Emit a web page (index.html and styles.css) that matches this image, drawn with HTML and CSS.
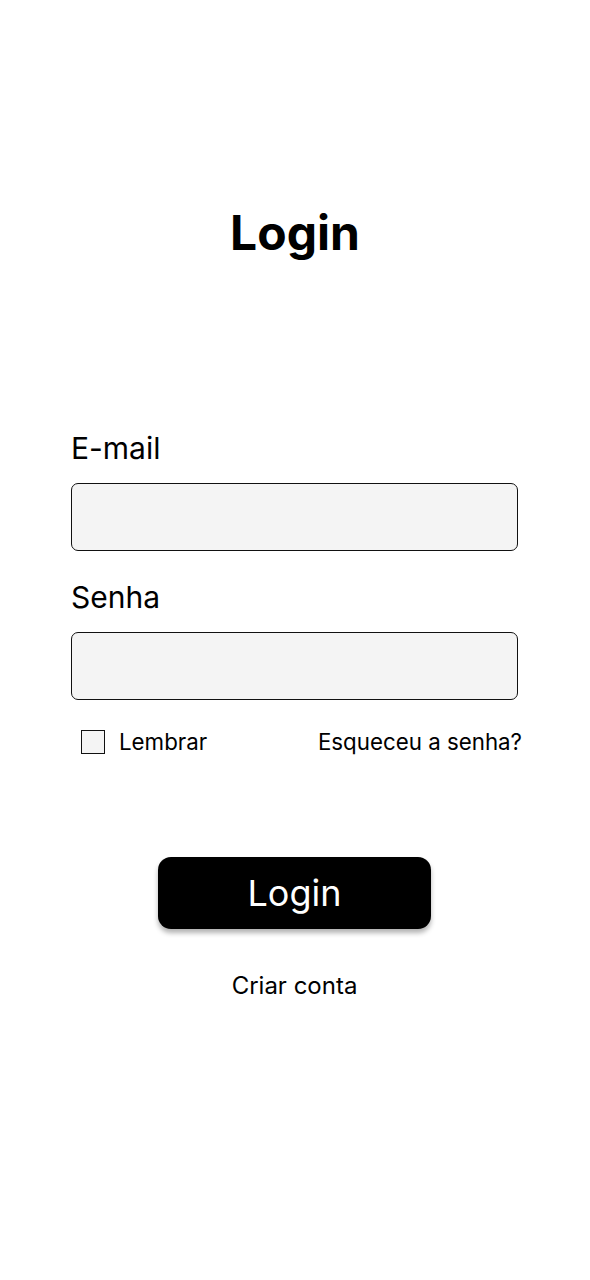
FILE: index.html
```html
<!DOCTYPE html>
<html lang="pt">
<head>
<meta charset="utf-8">
<link rel="stylesheet" href="styles.css">
</head>
<body>
<main class="page">
  <h1 class="title">Login</h1>
  <form class="form">
    <label class="label">E-mail</label>
    <div class="input"></div>
    <label class="label label-2">Senha</label>
    <div class="input"></div>
    <div class="row">
      <div class="remember"><span class="check"></span><span>Lembrar</span></div>
      <span class="forgot">Esqueceu a senha?</span>
    </div>
    <div class="btn-wrap"><button type="button" class="btn">Login</button></div>
    <div class="create">Criar conta</div>
  </form>
</main>
</body>
</html>
```

FILE: styles.css
```css
* { box-sizing: border-box; }
html, body { margin: 0; padding: 0; background: #fff; }
body { font-family: Inter, "Noto Sans", sans-serif; color: #000; width: 590px; height: 1280px; }
.page { display: flex; flex-direction: column; align-items: center; }
.title { margin: 204px 0 0; font-size: 48px; font-weight: 700; line-height: 58px; }
.form { width: 447px; margin-top: 168px; margin-right: 1px; display: flex; flex-direction: column; }
.label { font-size: 30px; line-height: 36px; font-weight: 400; }
.label-2 { margin-top: 28px; }
.input { margin-top: 17px; height: 68px; border: 1.8px solid #111; border-radius: 7px; background: #f4f4f4; }
.row { display: flex; justify-content: space-between; align-items: center; margin-top: 28px; margin-right: -4px; font-size: 22.3px; line-height: 28px; }
.remember { display: flex; align-items: center; gap: 14px; padding-left: 10px; }
.check { width: 24px; height: 24px; border: 1.8px solid #111; background: #f4f4f4; }
.btn-wrap { display: flex; justify-content: center; margin-top: 101px; }
.btn { width: 273px; height: 72px; border: none; border-radius: 13px; background: #000; color: #fff; font-family: Inter, "Noto Sans", sans-serif; font-size: 36px; box-shadow: 0 4px 5px rgba(0,0,0,0.3); padding: 0; }
.create { text-align: center; margin-top: 42px; font-size: 24px; line-height: 30px; }
```
